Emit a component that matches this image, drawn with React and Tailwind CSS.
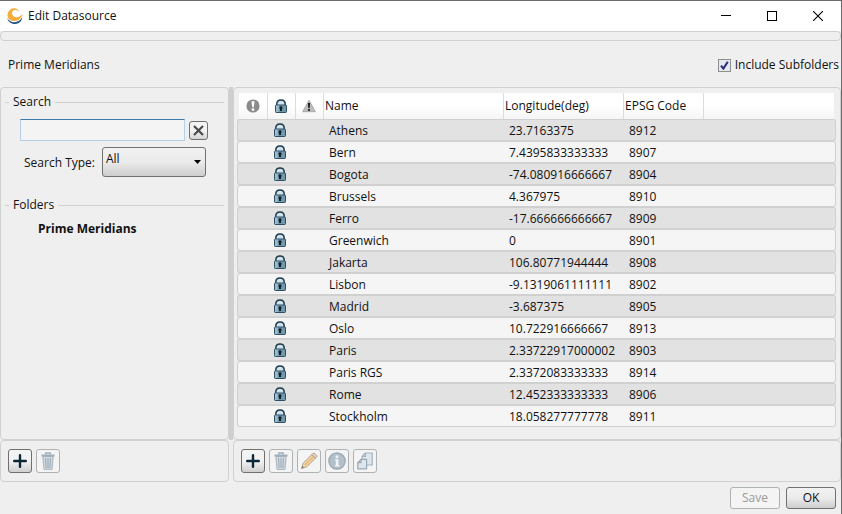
import React, { useState } from 'react';

const meridians = [
  { name: 'Athens', longitude: '23.7163375', code: '8912' },
  { name: 'Bern', longitude: '7.4395833333333', code: '8907' },
  { name: 'Bogota', longitude: '-74.080916666667', code: '8904' },
  { name: 'Brussels', longitude: '4.367975', code: '8910' },
  { name: 'Ferro', longitude: '-17.666666666667', code: '8909' },
  { name: 'Greenwich', longitude: '0', code: '8901' },
  { name: 'Jakarta', longitude: '106.80771944444', code: '8908' },
  { name: 'Lisbon', longitude: '-9.1319061111111', code: '8902' },
  { name: 'Madrid', longitude: '-3.687375', code: '8905' },
  { name: 'Oslo', longitude: '10.722916666667', code: '8913' },
  { name: 'Paris', longitude: '2.33722917000002', code: '8903' },
  { name: 'Paris RGS', longitude: '2.3372083333333', code: '8914' },
  { name: 'Rome', longitude: '12.452333333333', code: '8906' },
  { name: 'Stockholm', longitude: '18.058277777778', code: '8911' }
];

function Logo() {
  return (
    <svg viewBox="0 0 16 16" className="w-4 h-4" aria-hidden="true">
      <path d="M0.4 10 C2 13.6 6 14.8 9.6 13.8 C12.4 13 14.2 11.2 15.2 9 C15 13 12.2 16 8 16 C3.8 16 0.8 13.6 0.4 10Z" fill="#24557f" />
      <path d="M6.4 0.2 C2.8 0.8 0.3 4 0.5 7.4 C0.8 11 4 13.2 7.8 13 C11.8 12.8 15 10 15.6 5.6 C14 8.2 11.8 9.4 9.4 9.2 C6.8 9 5 7.4 5 5.2 C5 3.2 6.4 2 8.4 2 C10 2 11 2.6 12 3.6 C11.6 1.2 9 -0.2 6.4 0.2Z" fill="#f6ad3c" />
    </svg>
  );
}

function LockIcon() {
  return (
    <svg viewBox="0 0 12 14" className="w-3 h-3.5 mx-auto" aria-hidden="true">
      <path d="M1.8 7 V5 C1.8 2.4 3.6 0.9 6 0.9 C8.4 0.9 10.2 2.4 10.2 5 V7" fill="#cfe3ee" stroke="#1c3a4b" strokeWidth="1.5" />
      <rect x="0.5" y="6" width="11" height="7.5" rx="0.8" fill="#7397ab" stroke="#2f5064" />
      <path d="M1 6.5 H3.6 V13 H1Z" fill="#9dbccb" />
      <path d="M6 7.2 a1.6 1.6 0 0 1 1 2.8 V12 H5 V10 A1.6 1.6 0 0 1 6 7.2Z" fill="#0c1f2b" />
    </svg>
  );
}

function AlertIcon() {
  return (
    <svg viewBox="0 0 14 14" className="w-3.5 h-3.5 mx-auto" aria-hidden="true">
      <circle cx="7" cy="7" r="6.6" fill="#8c8c8c" />
      <path d="M5.5 2.2 H8.5 L7.8 8.2 H6.2Z" fill="#fff" />
      <circle cx="7" cy="10.6" r="1.4" fill="#fff" />
    </svg>
  );
}

function WarningIcon() {
  return (
    <svg viewBox="0 0 14 13" className="w-3.5 h-3.5 mx-auto" aria-hidden="true">
      <path d="M7 0.8 L13.3 12.2 H0.7Z" fill="#bdbdbd" stroke="#a8a8a8" strokeLinejoin="round" />
      <path d="M5.9 3.4 H8.1 L7.7 8.4 H6.3Z" fill="#1c1c1c" />
      <circle cx="7" cy="10.4" r="1.1" fill="#1c1c1c" />
    </svg>
  );
}

function PlusIcon() {
  return (
    <svg viewBox="0 0 14 14" className="w-3.5 h-3.5" aria-hidden="true">
      <path d="M7 1.2 V12.8 M1.2 7 H12.8" stroke="#0b2838" strokeWidth="2.4" strokeLinecap="round" />
    </svg>
  );
}

function TrashIcon() {
  return (
    <svg viewBox="0 0 14 18" className="w-3.5 h-[18px]" aria-hidden="true">
      <path d="M1.8 4.5 H12.2 L11 17.4 H3Z" fill="#d3dbe1" stroke="#a6b3bd" />
      <path d="M4.6 6 L5.1 16 M7 6 V16 M9.4 6 L8.9 16" stroke="#98a7b2" />
      <path d="M0.5 2.5 H13.5 V4.5 H0.5Z" fill="#a0aeb9" />
      <path d="M4.8 2.5 V1 H9.2 V2.5" fill="none" stroke="#a0aeb9" strokeWidth="1.4" />
    </svg>
  );
}

function PencilIcon() {
  return (
    <svg viewBox="0 0 18 18" className="w-[18px] h-[18px]" aria-hidden="true">
      <path d="M3.2 11.2 L11.8 2.6 L15.4 6.2 L6.8 14.8 L1.6 16.4Z" fill="#f2d3a2" stroke="#b5a08a" strokeLinejoin="round" />
      <path d="M5 13 L13.6 4.4" stroke="#e0b97f" strokeWidth="1.4" />
      <path d="M11.8 2.6 L13 1.4 Q13.8 0.8 14.6 1.4 L16.6 3.4 Q17.2 4.2 16.6 5 L15.4 6.2Z" fill="#e6cfc2" stroke="#ac9c90" />
      <path d="M1.4 16.6 L2.3 13.8 L4.2 15.7Z" fill="#7c8083" />
    </svg>
  );
}

function InfoIcon() {
  return (
    <svg viewBox="0 0 18 18" className="w-[18px] h-[18px]" aria-hidden="true">
      <circle cx="9" cy="9" r="8.2" fill="#b3c0ca" stroke="#98a7b2" strokeWidth="1.2" />
      <circle cx="9" cy="4.8" r="1.5" fill="#f1f4f6" />
      <path d="M7 7.2 H10.4 V13 H11.4 V14.4 H7 V13 H7.8 V8.6 H7Z" fill="#f1f4f6" />
    </svg>
  );
}

function CopyIcon() {
  return (
    <svg viewBox="0 0 16 18" className="w-4 h-[18px]" aria-hidden="true">
      <path d="M8.4 1 H15.2 V13 H5 V4.4Z" fill="#dfe6eb" stroke="#a3b2bd" strokeWidth="1.2" strokeLinejoin="round" />
      <path d="M8.4 1 V4.4 H5" fill="none" stroke="#a3b2bd" strokeWidth="1.2" />
      <path d="M4 7.4 H9.6 V16.8 H0.8 V10.6Z" fill="#dfe6eb" stroke="#98a8b4" strokeWidth="1.2" strokeLinejoin="round" />
      <path d="M4 7.4 V10.6 H0.8" fill="none" stroke="#98a8b4" strokeWidth="1.2" />
    </svg>
  );
}

function ToolButton({ label, disabled, children }) {
  return (
    <button
      type="button"
      aria-label={label}
      disabled={disabled}
      className={`flex items-center justify-center w-6 h-6 rounded-[3px] border ${
        disabled ? 'bg-[#f4f4f4] border-[#adb2b5]' : 'bg-linear-to-b from-[#f3f3f3] from-50% to-[#cfcfcf] border-[#707070]'
      }`}
    >
      {children}
    </button>
  );
}

function TitleBar() {
  return (
    <header className="flex items-center h-[30px] pl-[7px] bg-white">
      <Logo />
      <h1 className="ml-[5px] flex-1">Edit Datasource</h1>
      <button type="button" aria-label="Minimize" className="flex items-center justify-center w-[46px] h-full">
        <svg viewBox="0 0 10 10" className="w-2.5 h-2.5" shapeRendering="crispEdges"><path d="M0 4.5 H10" stroke="#000" /></svg>
      </button>
      <button type="button" aria-label="Maximize" className="flex items-center justify-center w-[46px] h-full">
        <svg viewBox="0 0 10 10" className="w-2.5 h-2.5" shapeRendering="crispEdges"><path d="M0.5 0.5 H9.5 V9.5 H0.5Z" fill="none" stroke="#000" /></svg>
      </button>
      <button type="button" aria-label="Close" className="flex items-center justify-center w-[46px] h-full">
        <svg viewBox="0 0 10 10" className="w-2.5 h-2.5"><path d="M0 0 L10 10 M10 0 L0 10" stroke="#000" strokeWidth="1.1" /></svg>
      </button>
    </header>
  );
}

function SidePanel() {
  const [search, setSearch] = useState('');
  const [searchType, setSearchType] = useState('All');

  return (
    <aside className="flex-1 rounded-[4px] border border-[#d0d0d0] px-1 pt-[5px]">
      <fieldset className="border-t border-[#d0d0d0] h-[103px]">
        <legend className="ml-1 px-1 leading-[18px]">Search</legend>
        <div className="flex items-center gap-1 pl-[15px] pt-2">
          <input
            type="text"
            aria-label="Search"
            value={search}
            onChange={(e) => setSearch(e.target.value)}
            className="w-[165px] h-[22px] px-1 bg-[#f4f4f4] border border-[#b5cfe7] border-t-[#3d7bad] outline-none"
          />
          <button
            type="button"
            aria-label="Clear search"
            onClick={() => setSearch('')}
            className="flex items-center justify-center w-[19px] h-[19px] rounded-[3px] border border-[#707070] bg-linear-to-b from-[#f3f3f3] from-50% to-[#d4d4d4]"
          >
            <svg viewBox="0 0 11 11" className="w-[11px] h-[11px]"><path d="M1 1 L10 10 M10 1 L1 10" stroke="#4a4a4a" strokeWidth="2.2" /></svg>
          </button>
        </div>
        <div className="flex items-center justify-end gap-[7px] pr-[18px] pt-1.5">
          <label htmlFor="search-type" className="pt-0.5">Search Type:</label>
          <div className="relative">
            <select
              id="search-type"
              value={searchType}
              onChange={(e) => setSearchType(e.target.value)}
              className="block appearance-none w-[104px] h-[30px] pl-[3px] pb-1.5 rounded-[3px] border border-[#707070] bg-linear-to-b from-[#f2f2f2] via-[#ebebeb] via-50% to-[#cdcdcd] outline-none"
            >
              <option>All</option>
              <option>Name</option>
              <option>EPSG Code</option>
            </select>
            <svg viewBox="0 0 7 4" className="absolute right-[5px] top-[13px] w-[7px] h-1 pointer-events-none"><path d="M0 0 H7 L3.5 4Z" fill="#000" /></svg>
          </div>
        </div>
      </fieldset>
      <fieldset className="border-t border-[#d0d0d0]">
        <legend className="ml-1 px-1 leading-[18px]">Folders</legend>
        <ul className="pl-[33px] pt-1.5">
          <li className="font-bold leading-[18px]">Prime Meridians</li>
        </ul>
      </fieldset>
    </aside>
  );
}

function MeridianTable() {
  const head = 'p-0 font-normal bg-linear-to-b from-white from-50% to-[#f5f5f5]';
  const line = 'border-r border-r-[#dcdcdc]';
  const text = 'block pt-0.5 pl-[5px]';

  return (
    <table className="w-full table-fixed border-separate border-spacing-0 text-left leading-[18px]">
      <colgroup>
        <col className="w-[31px]" />
        <col className="w-7" />
        <col className="w-7" />
        <col className="w-[180px]" />
        <col className="w-[120px]" />
        <col className="w-20" />
        <col />
      </colgroup>
      <thead>
        <tr className="h-[26px]">
          <th aria-label="Status" className={`${head} ${line} border-l-2 border-l-[#efefef]`}><AlertIcon /></th>
          <th aria-label="Locked" className={`${head} ${line}`}><div className="pr-0.5"><LockIcon /></div></th>
          <th aria-label="Warnings" className={`${head} ${line}`}><div className="pr-0.5"><WarningIcon /></div></th>
          <th className={`${head} ${line}`}><span className="pl-px">Name</span></th>
          <th className={`${head} ${line}`}><span className="pl-px">Longitude(deg)</span></th>
          <th className={`${head} ${line}`}><span className="pl-px">EPSG Code</span></th>
          <th aria-label="Filler" className={`${head} border-r-2 border-r-[#efefef]`}></th>
        </tr>
      </thead>
      <tbody>
        {meridians.map((m) => (
          <tr
            key={m.code}
            className="h-[22px] odd:bg-[#e2e2e2] even:bg-[#f5f5f5] *:border-y *:border-[#d0d0d0] *:p-0 *:first:border-l *:first:rounded-l-[3px] *:last:border-r *:last:rounded-r-[3px]"
          >
            <td></td>
            <td><div className="pr-1"><LockIcon /></div></td>
            <td></td>
            <td><span className={text}>{m.name}</span></td>
            <td><span className={text}>{m.longitude}</span></td>
            <td><span className={text}>{m.code}</span></td>
            <td></td>
          </tr>
        ))}
      </tbody>
    </table>
  );
}

function App() {
  const [subfolders, setSubfolders] = useState(true);
  const toolbar = 'flex items-center gap-1 h-[42px] rounded-[4px] border border-[#d0d0d0] px-[7px]';

  return (
    <div className="flex flex-col min-h-screen bg-[#efefef] border-t border-r border-[#6b6b6b] font-['Open_Sans','Noto_Sans',sans-serif] text-[12px] leading-4 text-[#111]">
      <TitleBar />
      <div className="h-2.5 rounded-[4px] border border-[#d0d0d0]"></div>

      <div className="flex items-center justify-between h-[46px] pt-0.5 pl-2 pr-0.5">
        <h2>Prime Meridians</h2>
        <label className="flex items-center gap-1">
          <input
            type="checkbox"
            checked={subfolders}
            onChange={(e) => setSubfolders(e.target.checked)}
            className="peer sr-only"
          />
          <span className="flex items-center justify-center w-[13px] h-[13px] border border-[#8e8f8f] bg-[#e6e8ee] text-transparent peer-checked:text-[#2b2d7c]">
            <svg viewBox="0 0 9 9" className="w-[9px] h-[9px]"><path d="M1 4.6 L3.4 7.6 L7.8 0.8" fill="none" stroke="currentColor" strokeWidth="2.1" /></svg>
          </span>
          Include Subfolders
        </label>
      </div>

      {/* Panels with the splitter between them */}
      <main className="flex flex-1">
        <div className="flex flex-col w-[229px]">
          <SidePanel />
          <div className={toolbar}>
            <ToolButton label="Add folder"><PlusIcon /></ToolButton>
            <ToolButton label="Delete folder" disabled><TrashIcon /></ToolButton>
          </div>
        </div>
        <div className="w-1 mb-[42px] bg-[#cfcfcf]"></div>
        <div className="flex flex-col flex-1 min-w-0">
          <section className="flex-1 rounded-[4px] border border-[#d0d0d0] pl-[3px] pr-1 pt-[5px]">
            <MeridianTable />
          </section>
          <div className={toolbar}>
            <ToolButton label="Add"><PlusIcon /></ToolButton>
            <ToolButton label="Delete" disabled><TrashIcon /></ToolButton>
            <ToolButton label="Edit" disabled><PencilIcon /></ToolButton>
            <ToolButton label="Info" disabled><InfoIcon /></ToolButton>
            <ToolButton label="Copy" disabled><CopyIcon /></ToolButton>
          </div>
        </div>
      </main>

      <footer className="flex justify-end gap-1.5 pt-[5px] pb-[5px] pr-[5px]">
        <button type="button" disabled className="w-[50px] h-[22px] rounded-[3px] border border-[#adb2b5] bg-[#f4f4f4] text-[#9a9a9a]">Save</button>
        <button type="button" className="w-[50px] h-[22px] rounded-[3px] border border-[#707070] bg-linear-to-b from-[#f2f2f2] via-[#ebebeb] via-50% to-[#cdcdcd]">OK</button>
      </footer>
    </div>
  );
}

export default App;
